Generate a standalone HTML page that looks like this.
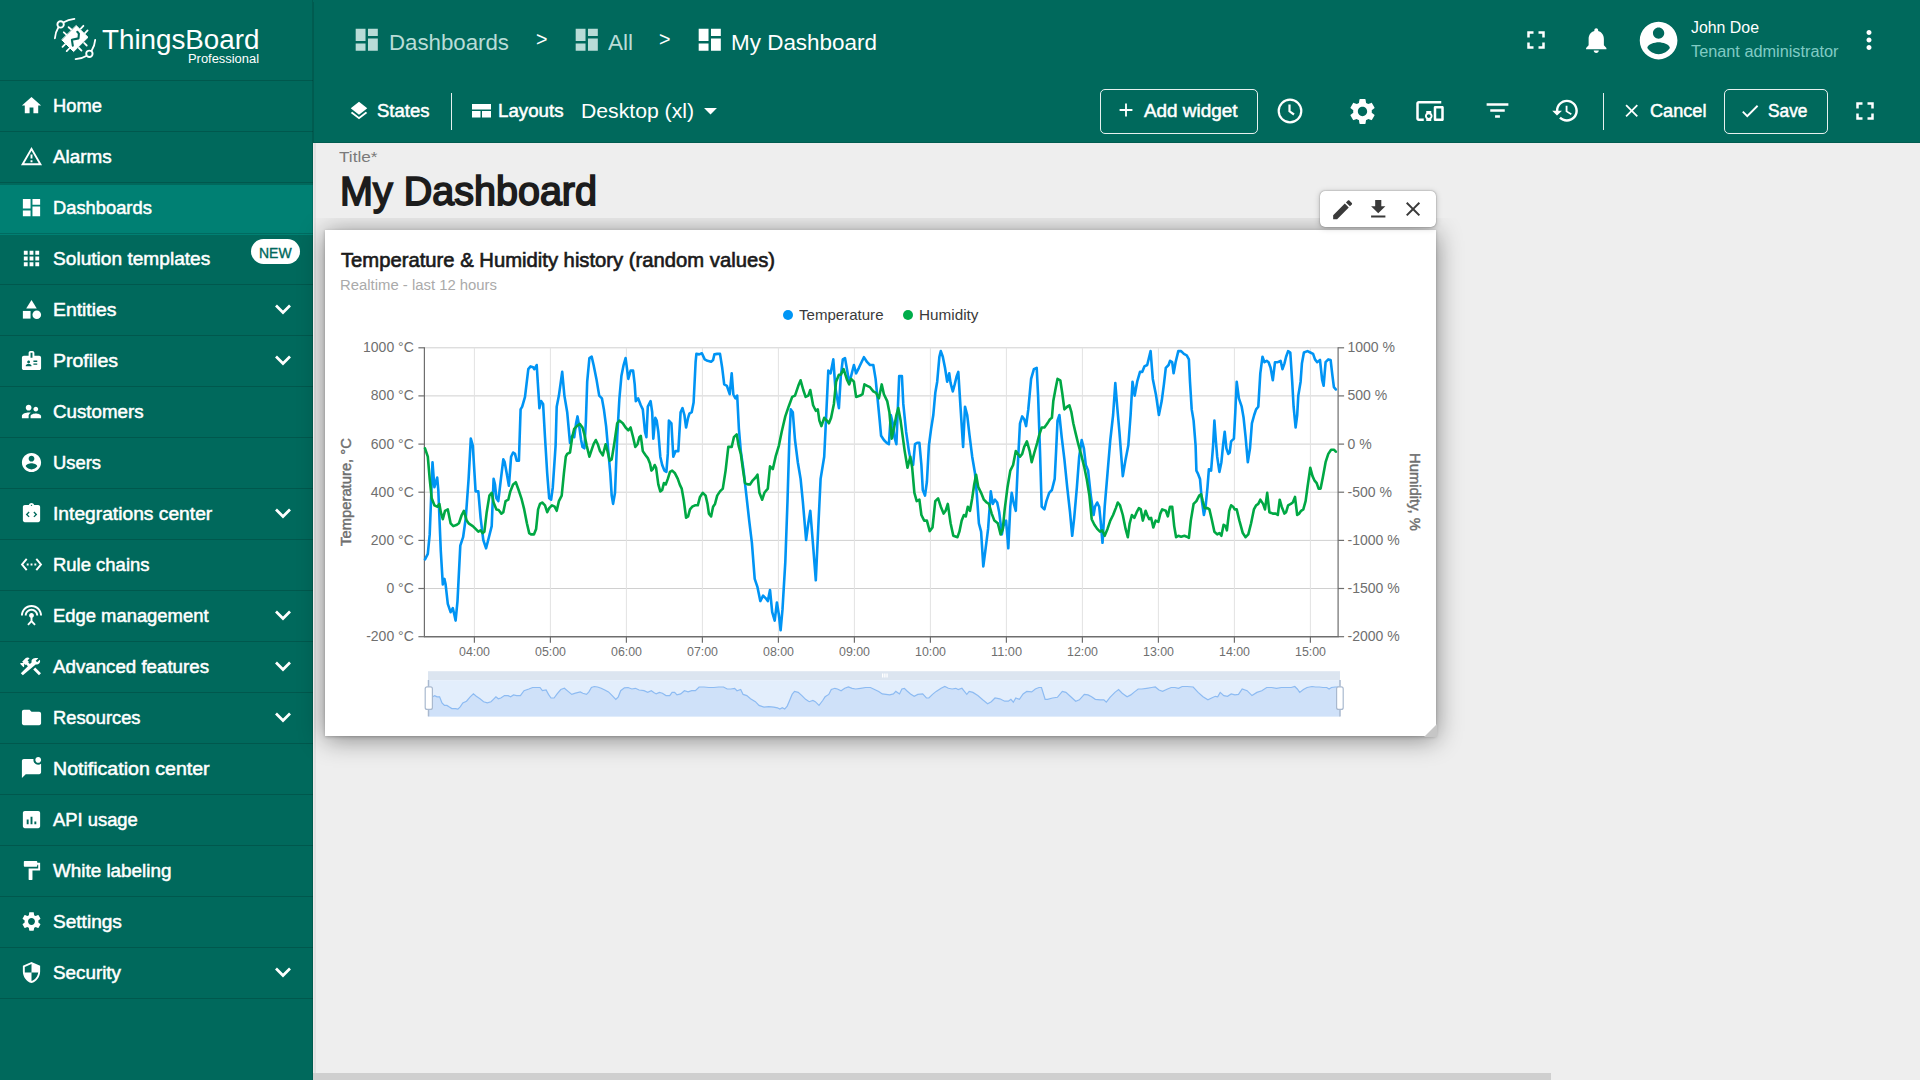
<!DOCTYPE html>
<html><head><meta charset="utf-8">
<style>
*{margin:0;padding:0;box-sizing:border-box}
html,body{width:1920px;height:1080px;overflow:hidden;background:#eeeeee;font-family:"Liberation Sans",sans-serif}
.abs{position:absolute}
.t{position:absolute;white-space:nowrap;line-height:1}
svg{display:block}
</style></head><body>
<div class="abs" style="left:0;top:0;width:313px;height:1080px;background:#00695c"></div>
<div class="abs" style="left:0;top:80px;width:313px;height:1px;background:rgba(0,0,0,0.16)"></div>
<div class="abs" style="left:0;top:131px;width:313px;height:1px;background:rgba(0,0,0,0.16)"></div>
<div class="t" style="left:53.00px;top:97.00px;font-size:18px;-webkit-text-stroke:0.49px #fff;color:#fff;transform:scaleX(1.0164);transform-origin:0 0;">Home</div>
<svg class="abs" style="left:19.5px;top:93.5px;width:23px;height:23px;fill:#fff;" viewBox="0 0 24 24"><path d="M10 20v-6h4v6h5v-8h3L12 3 2 12h3v8z"/></svg>
<div class="abs" style="left:0;top:182px;width:313px;height:1px;background:rgba(0,0,0,0.16)"></div>
<div class="t" style="left:53.00px;top:148.00px;font-size:18px;-webkit-text-stroke:0.49px #fff;color:#fff;transform:scaleX(1.0464);transform-origin:0 0;">Alarms</div>
<svg class="abs" style="left:19.5px;top:144.5px;width:23px;height:23px;fill:#fff;" viewBox="0 0 24 24"><path d="M12 5.99L19.53 19H4.47L12 5.99M12 2L1 21h22L12 2zm1 14h-2v2h2v-2zm0-6h-2v4h2v-4z"/></svg>
<div class="abs" style="left:0;top:185px;width:313px;height:50px;background:#008073"></div>
<div class="abs" style="left:0;top:233px;width:313px;height:1px;background:rgba(0,0,0,0.16)"></div>
<div class="t" style="left:53.00px;top:199.00px;font-size:18px;-webkit-text-stroke:0.49px #fff;color:#fff;transform:scaleX(1.0179);transform-origin:0 0;">Dashboards</div>
<svg class="abs" style="left:19.5px;top:195.5px;width:23px;height:23px;fill:#fff;" viewBox="0 0 24 24"><path d="M3 13h8V3H3v10zm0 8h8v-6H3v6zm10 0h8V11h-8v10zm0-18v6h8V3h-8z"/></svg>
<div class="abs" style="left:0;top:284px;width:313px;height:1px;background:rgba(0,0,0,0.16)"></div>
<div class="t" style="left:53.00px;top:250.00px;font-size:18px;-webkit-text-stroke:0.49px #fff;color:#fff;transform:scaleX(1.0619);transform-origin:0 0;">Solution templates</div>
<svg class="abs" style="left:19.5px;top:246.5px;width:23px;height:23px;fill:#fff;" viewBox="0 0 24 24"><path d="M4 8h4V4H4v4zm6 12h4v-4h-4v4zm-6 0h4v-4H4v4zm0-6h4v-4H4v4zm6 0h4v-4h-4v4zm6-10v4h4V4h-4zm-6 4h4V4h-4v4zm6 6h4v-4h-4v4zm0 6h4v-4h-4v4z"/></svg>
<div class="abs" style="left:0;top:335px;width:313px;height:1px;background:rgba(0,0,0,0.16)"></div>
<div class="t" style="left:53.00px;top:301.00px;font-size:18px;-webkit-text-stroke:0.49px #fff;color:#fff;transform:scaleX(1.0758);transform-origin:0 0;">Entities</div>
<svg class="abs" style="left:19.5px;top:297.5px;width:23px;height:23px;fill:#fff;" viewBox="0 0 24 24"><path d="M12 2l-5.5 9h11z"/><circle cx="17.5" cy="17.5" r="4.5"/><path d="M3 13.5h8v8H3z"/></svg>
<svg class="abs" style="left:272px;top:301.25px;width:22px;height:14px" viewBox="0 0 22 14"><path d="M4 4.5 L11 11.5 L18 4.5" fill="none" stroke="#fff" stroke-width="2.7"/></svg>
<div class="abs" style="left:0;top:386px;width:313px;height:1px;background:rgba(0,0,0,0.16)"></div>
<div class="t" style="left:53.00px;top:352.00px;font-size:18px;-webkit-text-stroke:0.49px #fff;color:#fff;transform:scaleX(1.0830);transform-origin:0 0;">Profiles</div>
<svg class="abs" style="left:19.5px;top:348.5px;width:23px;height:23px;fill:#fff;" viewBox="0 0 24 24"><path d="M20 7h-5V4c0-1.1-.9-2-2-2h-2c-1.1 0-2 .9-2 2v3H4c-1.1 0-2 .9-2 2v11c0 1.1.9 2 2 2h16c1.1 0 2-.9 2-2V9c0-1.1-.9-2-2-2zM9 12c.83 0 1.5.67 1.5 1.5S9.83 15 9 15s-1.5-.67-1.5-1.5S8.17 12 9 12zm3 6H6v-.43c0-.6.36-1.15.92-1.39.64-.28 1.34-.43 2.08-.43s1.44.15 2.08.43c.55.24.92.78.92 1.39V18zm1-9h-2V4h2v5zm5 7.5h-4V15h4v1.5zm0-3h-4V12h4v1.5z"/></svg>
<svg class="abs" style="left:272px;top:352.25px;width:22px;height:14px" viewBox="0 0 22 14"><path d="M4 4.5 L11 11.5 L18 4.5" fill="none" stroke="#fff" stroke-width="2.7"/></svg>
<div class="abs" style="left:0;top:437px;width:313px;height:1px;background:rgba(0,0,0,0.16)"></div>
<div class="t" style="left:53.00px;top:403.00px;font-size:18px;-webkit-text-stroke:0.49px #fff;color:#fff;transform:scaleX(1.0400);transform-origin:0 0;">Customers</div>
<svg class="abs" style="left:19.5px;top:399.5px;width:23px;height:23px;fill:#fff;" viewBox="0 0 24 24"><path d="M16.5 12c1.38 0 2.49-1.12 2.49-2.5S17.88 7 16.5 7C15.12 7 14 8.12 14 9.5s1.12 2.5 2.5 2.5zM9 11c1.66 0 2.99-1.34 2.99-3S10.66 5 9 5C7.34 5 6 6.34 6 8s1.34 3 3 3zm7.5 3c-1.83 0-5.5.92-5.5 2.75V19h11v-2.25c0-1.83-3.67-2.75-5.5-2.75zM9 13c-2.33 0-7 1.17-7 3.5V19h7v-2.25c0-.85.33-2.34 2.37-3.47C10.5 13.1 9.66 13 9 13z"/></svg>
<div class="abs" style="left:0;top:488px;width:313px;height:1px;background:rgba(0,0,0,0.16)"></div>
<div class="t" style="left:53.00px;top:454.00px;font-size:18px;-webkit-text-stroke:0.49px #fff;color:#fff;transform:scaleX(1.0212);transform-origin:0 0;">Users</div>
<svg class="abs" style="left:19.5px;top:450.5px;width:23px;height:23px;fill:#fff;" viewBox="0 0 24 24"><path d="M12 2C6.48 2 2 6.48 2 12s4.48 10 10 10 10-4.48 10-10S17.52 2 12 2zm0 3c1.66 0 3 1.34 3 3s-1.34 3-3 3-3-1.34-3-3 1.34-3 3-3zm0 14.2c-2.5 0-4.71-1.28-6-3.22.03-1.99 4-3.08 6-3.08 1.99 0 5.97 1.09 6 3.08-1.29 1.94-3.5 3.22-6 3.22z"/></svg>
<div class="abs" style="left:0;top:539px;width:313px;height:1px;background:rgba(0,0,0,0.16)"></div>
<div class="t" style="left:53.00px;top:505.00px;font-size:18px;-webkit-text-stroke:0.49px #fff;color:#fff;transform:scaleX(1.0681);transform-origin:0 0;">Integrations center</div>
<svg class="abs" style="left:19.5px;top:501.5px;width:23px;height:23px;fill:#fff;" viewBox="0 0 24 24"><path d="M19 3h-4.18C14.4 1.84 13.3 1 12 1s-2.4.84-2.82 2H5c-1.1 0-2 .9-2 2v14c0 1.1.9 2 2 2h14c1.1 0 2-.9 2-2V5c0-1.1-.9-2-2-2zm-7-.25c.41 0 .75.34.75.75s-.34.75-.75.75-.75-.34-.75-.75.34-.75.75-.75zM10 15l-1 1-3-3 3-3 1 1-2 2 2 2zm4 0l2-2-2-2 1-1 3 3-3 3-1-1z"/></svg>
<svg class="abs" style="left:272px;top:505.25px;width:22px;height:14px" viewBox="0 0 22 14"><path d="M4 4.5 L11 11.5 L18 4.5" fill="none" stroke="#fff" stroke-width="2.7"/></svg>
<div class="abs" style="left:0;top:590px;width:313px;height:1px;background:rgba(0,0,0,0.16)"></div>
<div class="t" style="left:53.00px;top:556.00px;font-size:18px;-webkit-text-stroke:0.49px #fff;color:#fff;transform:scaleX(1.0260);transform-origin:0 0;">Rule chains</div>
<svg class="abs" style="left:19.5px;top:552.5px;width:23px;height:23px;fill:#fff;" viewBox="0 0 24 24"><path d="M7.77 6.76L6.23 5.48.82 12l5.41 6.52 1.54-1.28L3.42 12l4.35-5.24zM7 13h2v-2H7v2zm10-2h-2v2h2v-2zm-6 2h2v-2h-2v2zm6.77-7.52l-1.54 1.28L20.58 12l-4.35 5.24 1.54 1.28L23.18 12l-5.41-6.52z"/></svg>
<div class="abs" style="left:0;top:641px;width:313px;height:1px;background:rgba(0,0,0,0.16)"></div>
<div class="t" style="left:53.00px;top:607.00px;font-size:18px;-webkit-text-stroke:0.49px #fff;color:#fff;transform:scaleX(1.0223);transform-origin:0 0;">Edge management</div>
<svg class="abs" style="left:19.5px;top:603.5px;width:23px;height:23px;fill:#fff;" viewBox="0 0 24 24"><path d="M12 5c-3.87 0-7 3.13-7 7h2c0-2.76 2.24-5 5-5s5 2.24 5 5h2c0-3.87-3.13-7-7-7zm1 9.29c.88-.39 1.5-1.26 1.5-2.29 0-1.38-1.12-2.5-2.5-2.5S9.5 10.62 9.5 12c0 1.02.62 1.9 1.5 2.29v3.3L7.59 21 9 22.41l3-3 3 3L16.41 21 13 17.59v-3.3zM12 1C5.93 1 1 5.93 1 12h2c0-4.97 4.03-9 9-9s9 4.03 9 9h2c0-6.07-4.93-11-11-11z"/></svg>
<svg class="abs" style="left:272px;top:607.25px;width:22px;height:14px" viewBox="0 0 22 14"><path d="M4 4.5 L11 11.5 L18 4.5" fill="none" stroke="#fff" stroke-width="2.7"/></svg>
<div class="abs" style="left:0;top:692px;width:313px;height:1px;background:rgba(0,0,0,0.16)"></div>
<div class="t" style="left:53.00px;top:658.00px;font-size:18px;-webkit-text-stroke:0.49px #fff;color:#fff;transform:scaleX(1.0393);transform-origin:0 0;">Advanced features</div>
<svg class="abs" style="left:19.5px;top:654.5px;width:23px;height:23px;fill:#fff;" viewBox="0 0 24 24"><path d="M13.783 15.172l2.121-2.121 5.996 5.996-2.121 2.121zM17.5 10c1.93 0 3.5-1.57 3.5-3.5 0-.58-.16-1.12-.41-1.6l-2.7 2.7-1.49-1.49 2.7-2.7c-.48-.25-1.02-.41-1.6-.41C13.57 3 12 4.57 12 6.5c0 .41.08.8.21 1.160l-1.85 1.85-1.78-1.78.71-.71-1.41-1.41L10 3.49c-1.17-1.17-3.070-1.17-4.240 0L2.22 7.03l1.41 1.41H.81l-.71.71 3.54 3.54.71-.71V9.15l1.41 1.41.71-.71 1.78 1.78-7.41 7.41 2.12 2.12L16.34 9.79c.36.13.75.21 1.16.21z"/></svg>
<svg class="abs" style="left:272px;top:658.25px;width:22px;height:14px" viewBox="0 0 22 14"><path d="M4 4.5 L11 11.5 L18 4.5" fill="none" stroke="#fff" stroke-width="2.7"/></svg>
<div class="abs" style="left:0;top:743px;width:313px;height:1px;background:rgba(0,0,0,0.16)"></div>
<div class="t" style="left:53.00px;top:709.00px;font-size:18px;-webkit-text-stroke:0.49px #fff;color:#fff;transform:scaleX(1.0170);transform-origin:0 0;">Resources</div>
<svg class="abs" style="left:19.5px;top:705.5px;width:23px;height:23px;fill:#fff;" viewBox="0 0 24 24"><path d="M10 4H4c-1.1 0-1.99.9-1.99 2L2 18c0 1.1.9 2 2 2h16c1.1 0 2-.9 2-2V8c0-1.1-.9-2-2-2h-8l-2-2z"/></svg>
<svg class="abs" style="left:272px;top:709.25px;width:22px;height:14px" viewBox="0 0 22 14"><path d="M4 4.5 L11 11.5 L18 4.5" fill="none" stroke="#fff" stroke-width="2.7"/></svg>
<div class="abs" style="left:0;top:794px;width:313px;height:1px;background:rgba(0,0,0,0.16)"></div>
<div class="t" style="left:53.00px;top:760.00px;font-size:18px;-webkit-text-stroke:0.49px #fff;color:#fff;transform:scaleX(1.0870);transform-origin:0 0;">Notification center</div>
<svg class="abs" style="left:19.5px;top:756.5px;width:23px;height:23px;fill:#fff;" viewBox="0 0 24 24"><path d="M22 6.98V16c0 1.1-.9 2-2 2H6l-4 4V4c0-1.1.9-2 2-2h10.1c-.06.32-.1.66-.1 1 0 2.76 2.24 5 5 5 1.13 0 2.160-.39 3-1.020zM16 3c0 1.66 1.34 3 3 3s3-1.34 3-3-1.34-3-3-3-3 1.34-3 3z"/></svg>
<div class="abs" style="left:0;top:845px;width:313px;height:1px;background:rgba(0,0,0,0.16)"></div>
<div class="t" style="left:53.00px;top:811.00px;font-size:18px;-webkit-text-stroke:0.49px #fff;color:#fff;transform:scaleX(1.0210);transform-origin:0 0;">API usage</div>
<svg class="abs" style="left:19.5px;top:807.5px;width:23px;height:23px;fill:#fff;" viewBox="0 0 24 24"><path d="M19 3H5c-1.1 0-2 .9-2 2v14c0 1.1.9 2 2 2h14c1.1 0 2-.9 2-2V5c0-1.1-.9-2-2-2zM9 17H7v-5h2v5zm4 0h-2V9h2v8zm4 0h-2v-3h2v3z"/></svg>
<div class="abs" style="left:0;top:896px;width:313px;height:1px;background:rgba(0,0,0,0.16)"></div>
<div class="t" style="left:53.00px;top:862.00px;font-size:18px;-webkit-text-stroke:0.49px #fff;color:#fff;transform:scaleX(1.0472);transform-origin:0 0;">White labeling</div>
<svg class="abs" style="left:19.5px;top:858.5px;width:23px;height:23px;fill:#fff;" viewBox="0 0 24 24"><path d="M18 4V3c0-.55-.45-1-1-1H5c-.55 0-1 .45-1 1v4c0 .55.45 1 1 1h12c.55 0 1-.45 1-1V6h1v4H9v11c0 .55.45 1 1 1h2c.55 0 1-.45 1-1v-9h8V4h-3z"/></svg>
<div class="abs" style="left:0;top:947px;width:313px;height:1px;background:rgba(0,0,0,0.16)"></div>
<div class="t" style="left:53.00px;top:913.00px;font-size:18px;-webkit-text-stroke:0.49px #fff;color:#fff;transform:scaleX(1.0593);transform-origin:0 0;">Settings</div>
<svg class="abs" style="left:19.5px;top:909.5px;width:23px;height:23px;fill:#fff;" viewBox="0 0 24 24"><path d="M19.14 12.94c.04-.3.06-.61.06-.94 0-.32-.02-.64-.07-.94l2.03-1.58c.18-.14.23-.41.12-.61l-1.920-3.32c-.12-.22-.37-.29-.59-.22l-2.39.96c-.5-.38-1.03-.7-1.62-.94l-.36-2.54c-.04-.24-.24-.41-.48-.41h-3.84c-.24 0-.43.17-.47.41l-.36 2.54c-.59.24-1.13.57-1.62.94l-2.39-.96c-.22-.08-.47 0-.59.22L2.74 8.87c-.12.21-.08.47.12.61l2.03 1.58c-.05.3-.09.63-.09.94s.02.64.07.94l-2.03 1.58c-.18.14-.23.41-.12.61l1.92 3.32c.12.22.37.29.59.22l2.39-.96c.5.38 1.03.7 1.62.94l.36 2.54c.05.24.24.41.48.41h3.84c.24 0 .44-.17.47-.41l.36-2.54c.59-.24 1.13-.56 1.62-.94l2.39.96c.22.08.47 0 .59-.22l1.92-3.32c.12-.22.07-.47-.12-.61l-2.01-1.58zM12 15.6c-1.98 0-3.6-1.62-3.6-3.6s1.62-3.6 3.6-3.6 3.6 1.62 3.6 3.6-1.62 3.6-3.6 3.6z"/></svg>
<div class="abs" style="left:0;top:998px;width:313px;height:1px;background:rgba(0,0,0,0.16)"></div>
<div class="t" style="left:53.00px;top:964.00px;font-size:18px;-webkit-text-stroke:0.49px #fff;color:#fff;transform:scaleX(1.0458);transform-origin:0 0;">Security</div>
<svg class="abs" style="left:19.5px;top:960.5px;width:23px;height:23px;fill:#fff;" viewBox="0 0 24 24"><path d="M12 1L3 5v6c0 5.55 3.84 10.74 9 12 5.16-1.26 9-6.45 9-12V5l-9-4zm0 10.99h7c-.53 4.12-3.28 7.79-7 8.94V12H5V6.3l7-3.11v8.8z"/></svg>
<svg class="abs" style="left:272px;top:964.25px;width:22px;height:14px" viewBox="0 0 22 14"><path d="M4 4.5 L11 11.5 L18 4.5" fill="none" stroke="#fff" stroke-width="2.7"/></svg>
<div class="abs" style="left:251.3px;top:239.2px;width:49px;height:25px;border-radius:13px;background:#fff"></div>
<div class="t" style="left:259.30px;top:245.00px;font-size:15.5px;-webkit-text-stroke:0.40px #00695c;color:#00695c;transform:scaleX(0.9015);transform-origin:0 0;">NEW</div>
<div class="t" style="left:101.80px;top:25.00px;font-size:28.4px;color:#fff;transform:scaleX(0.9781);transform-origin:0 0;">ThingsBoard</div>
<div class="t" style="left:187.60px;top:53.00px;font-size:12px;color:#fff;transform:scaleX(1.0752);transform-origin:0 0;">Professional</div>
<svg class="abs" style="left:50px;top:14px;width:50px;height:50px" viewBox="0 0 50 50" fill="none" stroke="#fff" stroke-linecap="round">
<circle cx="10.6" cy="10.4" r="3.2" stroke-width="1.9"/>
<path d="M13.8 8.3 C17 6.3 20.5 5.4 24.4 4.9" stroke-width="1.8"/>
<path d="M8.3 13.6 C6.3 16.8 5.2 20.4 4.9 24.3" stroke-width="1.8"/>
<circle cx="39.4" cy="39.8" r="3.2" stroke-width="1.9"/>
<path d="M36.2 41.9 C33 43.9 29.5 44.8 25.6 45.2" stroke-width="1.8"/>
<path d="M41.7 36.6 C43.7 33.4 44.8 29.8 45.2 25.8" stroke-width="1.8"/>
<path d="M26.4 11.8 L38 23.3 L23.6 37.6 L12 26 Z" fill="#fff" stroke="#fff" stroke-width="1" stroke-linejoin="round"/>
<g stroke-width="1.8">
<path d="M13.8 18.3 L16.6 20.8"/><path d="M18.6 13.2 L21.3 15.5"/>
<path d="M33.4 11.8 L30.8 14.6"/><path d="M37.6 16.4 L35 19.2"/>
<path d="M36.7 31.5 L34.1 28.9"/><path d="M31.5 36.6 L28.9 34"/>
<path d="M12.5 32.9 L15 30.3"/><path d="M16.7 37.1 L19.2 34.5"/>
</g>
<path d="M27.3 17.8 L28.9 19.6 L28.5 24.4 L21.9 25.8 L22.8 31.6" stroke="#00695c" stroke-width="2.1" stroke-linejoin="round"/>
</svg>
<div class="abs" style="left:312px;top:0;width:1px;height:1080px;background:rgba(0,0,0,0.12)"></div>
<div class="abs" style="left:313px;top:0;width:1607px;height:143px;background:#00695c"></div>
<div class="abs" style="left:313px;top:2px;width:1px;height:140px;background:rgba(0,0,0,0.13)"></div>
<svg class="abs" style="left:352.0px;top:25.0px;width:29.5px;height:29.5px;fill:#b9dcd7;" viewBox="0 0 24 24"><path d="M3 13h8V3H3v10zm0 8h8v-6H3v6zm10 0h8V11h-8v10zm0-18v6h8V3h-8z"/></svg>
<div class="t" style="left:388.50px;top:32.00px;font-size:22px;color:#b9dcd7;transform:scaleX(1.0116);transform-origin:0 0;">Dashboards</div>
<div class="t" style="left:535.50px;top:29.00px;font-size:20px;color:#fff;transform:scaleX(0.9846);transform-origin:0 0;">></div>
<svg class="abs" style="left:571.6px;top:24.9px;width:29.5px;height:29.5px;fill:#b9dcd7;" viewBox="0 0 24 24"><path d="M3 13h8V3H3v10zm0 8h8v-6H3v6zm10 0h8V11h-8v10zm0-18v6h8V3h-8z"/></svg>
<div class="t" style="left:607.50px;top:32.00px;font-size:22px;color:#b9dcd7;transform:scaleX(1.0226);transform-origin:0 0;">All</div>
<div class="t" style="left:658.50px;top:29.00px;font-size:20px;color:#fff;transform:scaleX(0.9846);transform-origin:0 0;">></div>
<svg class="abs" style="left:694.8px;top:24.9px;width:29.5px;height:29.5px;fill:#fff;" viewBox="0 0 24 24"><path d="M3 13h8V3H3v10zm0 8h8v-6H3v6zm10 0h8V11h-8v10zm0-18v6h8V3h-8z"/></svg>
<div class="t" style="left:730.50px;top:32.00px;font-size:22px;color:#fff;transform:scaleX(1.0205);transform-origin:0 0;">My Dashboard</div>
<svg class="abs" style="left:1521px;top:25px;width:30px;height:30px;fill:#fff;" viewBox="0 0 24 24"><path d="M7 14H5v5h5v-2H7v-3zm-2-4h2V7h3V5H5v5zm12 7h-3v2h5v-5h-2v3zM14 5v2h3v3h2V5h-5z"/></svg>
<svg class="abs" style="left:1580.9px;top:24.8px;width:30.5px;height:30.5px;fill:#fff;" viewBox="0 0 24 24"><path d="M12 22c1.1 0 2-.9 2-2h-4c0 1.1.89 2 2 2zm6-6v-5c0-3.07-1.64-5.64-4.5-6.32V4c0-.83-.67-1.5-1.5-1.5s-1.5.67-1.5 1.5v.68C7.63 5.36 6 7.92 6 11v5l-2 2v1h16v-1l-2-2z"/></svg>
<svg class="abs" style="left:1636.3px;top:17.8px;width:45.2px;height:45.2px;fill:#fff;" viewBox="0 0 24 24"><path d="M12 2C6.48 2 2 6.48 2 12s4.48 10 10 10 10-4.48 10-10S17.52 2 12 2zm0 3c1.66 0 3 1.34 3 3s-1.34 3-3 3-3-1.34-3-3 1.34-3 3-3zm0 14.2c-2.5 0-4.71-1.28-6-3.22.03-1.99 4-3.08 6-3.08 1.99 0 5.97 1.09 6 3.08-1.29 1.94-3.5 3.22-6 3.22z"/></svg>
<div class="t" style="left:1691.20px;top:20.00px;font-size:16px;color:#fff;transform:scaleX(0.9928);transform-origin:0 0;">John Doe</div>
<div class="t" style="left:1691.20px;top:44.00px;font-size:16px;color:#80cbc4;transform:scaleX(1.0175);transform-origin:0 0;">Tenant administrator</div>
<svg class="abs" style="left:1854px;top:25px;width:30px;height:30px;fill:#fff;" viewBox="0 0 24 24"><path d="M12 8c1.1 0 2-.9 2-2s-.9-2-2-2-2 .9-2 2 .9 2 2 2zm0 2c-1.1 0-2 .9-2 2s.9 2 2 2 2-.9 2-2-.9-2-2-2zm0 6c-1.1 0-2 .9-2 2s.9 2 2 2 2-.9 2-2-.9-2-2-2z"/></svg>
<svg class="abs" style="left:347.6px;top:99.7px;width:22px;height:22px;fill:#fff;" viewBox="0 0 24 24"><path d="M11.99 18.54l-7.37-5.73L3 14.07l9 7 9-7-1.63-1.27-7.38 5.74zM12 16l7.36-5.73L21 9l-9-7-9 7 1.63 1.27L12 16z"/></svg>
<div class="t" style="left:376.50px;top:102.00px;font-size:18px;-webkit-text-stroke:0.49px #fff;color:#fff;transform:scaleX(1.0288);transform-origin:0 0;">States</div>
<div class="abs" style="left:451px;top:93px;width:1px;height:37px;background:rgba(255,255,255,0.9)"></div>
<svg class="abs" style="left:471.5px;top:104px;width:19px;height:13.5px" viewBox="0 0 19 13.5" fill="#fff">
<rect x="0" y="0" width="19" height="5.5"/><rect x="0" y="7" width="8.5" height="6.5"/><rect x="10" y="7" width="9" height="6.5"/></svg>
<div class="t" style="left:498.20px;top:102.00px;font-size:18px;-webkit-text-stroke:0.49px #fff;color:#fff;transform:scaleX(1.0389);transform-origin:0 0;">Layouts</div>
<div class="t" style="left:581.20px;top:101.00px;font-size:20px;color:#fff;transform:scaleX(1.0591);transform-origin:0 0;">Desktop (xl)</div>
<svg class="abs" style="left:695px;top:95px;width:31px;height:31px;fill:#fff;" viewBox="0 0 24 24"><path d="M7 10l5 5 5-5z"/></svg>
<div class="abs" style="left:1100px;top:89px;width:158px;height:45px;border:1px solid rgba(255,255,255,0.9);border-radius:5px"></div>
<svg class="abs" style="left:1115px;top:99.4px;width:22px;height:22px;fill:#fff;" viewBox="0 0 24 24"><path d="M19 13h-6v6h-2v-6H5v-2h6V5h2v6h6v2z"/></svg>
<div class="t" style="left:1144.00px;top:102.00px;font-size:18px;-webkit-text-stroke:0.49px #fff;color:#fff;transform:scaleX(1.0498);transform-origin:0 0;">Add widget</div>
<svg class="abs" style="left:1276px;top:97px;width:28px;height:28px" viewBox="0 0 28 28" fill="none" stroke="#fff" stroke-width="2.2">
<circle cx="14" cy="14" r="11.3"/><path d="M13.5 7.5 V14.3 L18 17.5"/></svg>
<svg class="abs" style="left:1346.5px;top:95.5px;width:31px;height:31px;fill:#fff;" viewBox="0 0 24 24"><path d="M19.14 12.94c.04-.3.06-.61.06-.94 0-.32-.02-.64-.07-.94l2.03-1.58c.18-.14.23-.41.12-.61l-1.920-3.32c-.12-.22-.37-.29-.59-.22l-2.39.96c-.5-.38-1.03-.7-1.62-.94l-.36-2.54c-.04-.24-.24-.41-.48-.41h-3.84c-.24 0-.43.17-.47.41l-.36 2.54c-.59.24-1.13.57-1.62.94l-2.39-.96c-.22-.08-.47 0-.59.22L2.74 8.87c-.12.21-.08.47.12.61l2.03 1.58c-.05.3-.09.63-.09.94s.02.64.07.94l-2.03 1.58c-.18.14-.23.41-.12.61l1.92 3.32c.12.22.37.29.59.22l2.39-.96c.5.38 1.03.7 1.62.94l.36 2.54c.05.24.24.41.48.41h3.84c.24 0 .44-.17.47-.41l.36-2.54c.59-.24 1.13-.56 1.62-.94l2.39.96c.22.08.47 0 .59-.22l1.92-3.32c.12-.22.07-.47-.12-.61l-2.01-1.58zM12 15.6c-1.98 0-3.6-1.62-3.6-3.6s1.62-3.6 3.6-3.6 3.6 1.62 3.6 3.6-1.62 3.6-3.6 3.6z"/></svg>
<svg class="abs" style="left:1414.8px;top:96.3px;width:30px;height:30px;fill:#fff;" viewBox="0 0 24 24"><path d="M3 6h18V4H3c-1.1 0-2 .9-2 2v12c0 1.1.9 2 2 2h4v-2H3V6zm10 6H9v1.78c-.61.55-1 1.33-1 2.22s.39 1.67 1 2.22V20h4v-1.78c.61-.55 1-1.34 1-2.22s-.39-1.67-1-2.22V12zm-2 5.5c-.83 0-1.5-.67-1.5-1.5s.67-1.5 1.5-1.5 1.5.67 1.5 1.5-.67 1.5-1.5 1.5zM22 8h-6c-.5 0-1 .5-1 1v10c0 .5.5 1 1 1h6c.5 0 1-.5 1-1V9c0-.5-.5-1-1-1zm-1 10h-4v-8h4v8z"/></svg>
<svg class="abs" style="left:1483px;top:95.5px;width:29px;height:29px;fill:#fff;" viewBox="0 0 24 24"><path d="M10 18h4v-2h-4v2zM3 6v2h18V6H3zm3 7h12v-2H6v2z"/></svg>
<svg class="abs" style="left:1550.8px;top:96px;width:29.3px;height:29.3px;fill:#fff;" viewBox="0 0 24 24"><path d="M13 3c-4.97 0-9 4.03-9 9H1l3.89 3.89.07.14L9 12H6c0-3.87 3.13-7 7-7s7 3.13 7 7-3.13 7-7 7c-1.93 0-3.68-.79-4.94-2.06l-1.42 1.42C8.27 19.99 10.51 21 13 21c4.97 0 9-4.03 9-9s-4.03-9-9-9zm-1 5v5l4.28 2.54.72-1.21-3.5-2.08V8H12z"/></svg>
<div class="abs" style="left:1603px;top:93px;width:1px;height:37px;background:rgba(255,255,255,0.9)"></div>
<svg class="abs" style="left:1621px;top:100.3px;width:21.4px;height:21.4px;fill:#fff;" viewBox="0 0 24 24"><path d="M19 6.41L17.59 5 12 10.59 6.41 5 5 6.41 10.59 12 5 17.59 6.41 19 12 13.41 17.59 19 19 17.59 13.41 12z"/></svg>
<div class="t" style="left:1650.00px;top:102.00px;font-size:18px;-webkit-text-stroke:0.49px #fff;color:#fff;transform:scaleX(1.0084);transform-origin:0 0;">Cancel</div>
<div class="abs" style="left:1724px;top:89px;width:104px;height:45px;border:1px solid rgba(255,255,255,0.9);border-radius:5px"></div>
<svg class="abs" style="left:1739px;top:100px;width:22px;height:22px;fill:#fff;" viewBox="0 0 24 24"><path d="M9 16.17L4.83 12l-1.42 1.42L9 19 21 7l-1.41-1.41z"/></svg>
<div class="t" style="left:1767.50px;top:102.00px;font-size:18px;-webkit-text-stroke:0.49px #fff;color:#fff;transform:scaleX(0.9628);transform-origin:0 0;">Save</div>
<svg class="abs" style="left:1850px;top:95.8px;width:30px;height:30px;fill:#fff;" viewBox="0 0 24 24"><path d="M7 14H5v5h5v-2H7v-3zm-2-4h2V7h3V5H5v5zm12 7h-3v2h5v-5h-2v3zM14 5v2h3v3h2V5h-5z"/></svg>
<div class="abs" style="left:313px;top:143px;width:1607px;height:937px;background:#eeeeee"></div>
<div class="abs" style="left:325px;top:230px;width:1111px;height:506px;background:#fff;box-shadow:0 1px 3px rgba(0,0,0,0.22),0 3px 24px rgba(0,0,0,0.45)"></div>
<div class="t" style="left:340.50px;top:249.00px;font-size:21px;-webkit-text-stroke:0.66px #1a1a1a;color:#1a1a1a;transform:scaleX(0.9634);transform-origin:0 0;">Temperature &amp; Humidity history (random values)</div>
<div class="t" style="left:340.00px;top:278.00px;font-size:14px;color:#aaaaaa;transform:scaleX(1.0620);transform-origin:0 0;">Realtime - last 12 hours</div>
<div class="abs" style="left:783px;top:310px;width:10px;height:10px;border-radius:5px;background:#0096f5"></div>
<div class="abs" style="left:903px;top:310px;width:10px;height:10px;border-radius:5px;background:#00ad4a"></div>
<div class="t" style="left:799.00px;top:307.00px;font-size:15px;color:#3a3a3a;transform:scaleX(1.0035);transform-origin:0 0;">Temperature</div>
<div class="t" style="left:918.70px;top:307.00px;font-size:15px;color:#3a3a3a;transform:scaleX(1.0198);transform-origin:0 0;">Humidity</div>
<svg class="abs" style="left:0;top:0;width:1920px;height:1080px;overflow:visible" viewBox="0 0 1920 1080">
<line x1="424.4" y1="347.8" x2="1338.1" y2="347.8" stroke="#d0d0d0" stroke-width="1"/>
<line x1="424.4" y1="395.9" x2="1338.1" y2="395.9" stroke="#d0d0d0" stroke-width="1"/>
<line x1="424.4" y1="444.1" x2="1338.1" y2="444.1" stroke="#d0d0d0" stroke-width="1"/>
<line x1="424.4" y1="492.2" x2="1338.1" y2="492.2" stroke="#d0d0d0" stroke-width="1"/>
<line x1="424.4" y1="540.4" x2="1338.1" y2="540.4" stroke="#d0d0d0" stroke-width="1"/>
<line x1="424.4" y1="588.5" x2="1338.1" y2="588.5" stroke="#d0d0d0" stroke-width="1"/>
<line x1="474.4" y1="347.8" x2="474.4" y2="636.7" stroke="#e2e2e2" stroke-width="1"/>
<line x1="550.4" y1="347.8" x2="550.4" y2="636.7" stroke="#e2e2e2" stroke-width="1"/>
<line x1="626.4" y1="347.8" x2="626.4" y2="636.7" stroke="#e2e2e2" stroke-width="1"/>
<line x1="702.4" y1="347.8" x2="702.4" y2="636.7" stroke="#e2e2e2" stroke-width="1"/>
<line x1="778.4" y1="347.8" x2="778.4" y2="636.7" stroke="#e2e2e2" stroke-width="1"/>
<line x1="854.4" y1="347.8" x2="854.4" y2="636.7" stroke="#e2e2e2" stroke-width="1"/>
<line x1="930.4" y1="347.8" x2="930.4" y2="636.7" stroke="#e2e2e2" stroke-width="1"/>
<line x1="1006.4" y1="347.8" x2="1006.4" y2="636.7" stroke="#e2e2e2" stroke-width="1"/>
<line x1="1082.4" y1="347.8" x2="1082.4" y2="636.7" stroke="#e2e2e2" stroke-width="1"/>
<line x1="1158.4" y1="347.8" x2="1158.4" y2="636.7" stroke="#e2e2e2" stroke-width="1"/>
<line x1="1234.4" y1="347.8" x2="1234.4" y2="636.7" stroke="#e2e2e2" stroke-width="1"/>
<line x1="1310.4" y1="347.8" x2="1310.4" y2="636.7" stroke="#e2e2e2" stroke-width="1"/>
<line x1="424.4" y1="347.3" x2="424.4" y2="636.7" stroke="#6e6e6e" stroke-width="1.2"/>
<line x1="1338.1" y1="347.3" x2="1338.1" y2="636.7" stroke="#6e6e6e" stroke-width="1.2"/>
<line x1="423.9" y1="636.7" x2="1338.6" y2="636.7" stroke="#6e6e6e" stroke-width="1.5"/>
<line x1="418.4" y1="347.8" x2="424.4" y2="347.8" stroke="#6e6e6e" stroke-width="1.2"/>
<line x1="1338.1" y1="347.8" x2="1344.1" y2="347.8" stroke="#6e6e6e" stroke-width="1.2"/>
<line x1="418.4" y1="395.9" x2="424.4" y2="395.9" stroke="#6e6e6e" stroke-width="1.2"/>
<line x1="1338.1" y1="395.9" x2="1344.1" y2="395.9" stroke="#6e6e6e" stroke-width="1.2"/>
<line x1="418.4" y1="444.1" x2="424.4" y2="444.1" stroke="#6e6e6e" stroke-width="1.2"/>
<line x1="1338.1" y1="444.1" x2="1344.1" y2="444.1" stroke="#6e6e6e" stroke-width="1.2"/>
<line x1="418.4" y1="492.2" x2="424.4" y2="492.2" stroke="#6e6e6e" stroke-width="1.2"/>
<line x1="1338.1" y1="492.2" x2="1344.1" y2="492.2" stroke="#6e6e6e" stroke-width="1.2"/>
<line x1="418.4" y1="540.4" x2="424.4" y2="540.4" stroke="#6e6e6e" stroke-width="1.2"/>
<line x1="1338.1" y1="540.4" x2="1344.1" y2="540.4" stroke="#6e6e6e" stroke-width="1.2"/>
<line x1="418.4" y1="588.5" x2="424.4" y2="588.5" stroke="#6e6e6e" stroke-width="1.2"/>
<line x1="1338.1" y1="588.5" x2="1344.1" y2="588.5" stroke="#6e6e6e" stroke-width="1.2"/>
<line x1="418.4" y1="636.7" x2="424.4" y2="636.7" stroke="#6e6e6e" stroke-width="1.2"/>
<line x1="1338.1" y1="636.7" x2="1344.1" y2="636.7" stroke="#6e6e6e" stroke-width="1.2"/>
<line x1="474.4" y1="636.7" x2="474.4" y2="642.7" stroke="#6e6e6e" stroke-width="1.2"/>
<line x1="550.4" y1="636.7" x2="550.4" y2="642.7" stroke="#6e6e6e" stroke-width="1.2"/>
<line x1="626.4" y1="636.7" x2="626.4" y2="642.7" stroke="#6e6e6e" stroke-width="1.2"/>
<line x1="702.4" y1="636.7" x2="702.4" y2="642.7" stroke="#6e6e6e" stroke-width="1.2"/>
<line x1="778.4" y1="636.7" x2="778.4" y2="642.7" stroke="#6e6e6e" stroke-width="1.2"/>
<line x1="854.4" y1="636.7" x2="854.4" y2="642.7" stroke="#6e6e6e" stroke-width="1.2"/>
<line x1="930.4" y1="636.7" x2="930.4" y2="642.7" stroke="#6e6e6e" stroke-width="1.2"/>
<line x1="1006.4" y1="636.7" x2="1006.4" y2="642.7" stroke="#6e6e6e" stroke-width="1.2"/>
<line x1="1082.4" y1="636.7" x2="1082.4" y2="642.7" stroke="#6e6e6e" stroke-width="1.2"/>
<line x1="1158.4" y1="636.7" x2="1158.4" y2="642.7" stroke="#6e6e6e" stroke-width="1.2"/>
<line x1="1234.4" y1="636.7" x2="1234.4" y2="642.7" stroke="#6e6e6e" stroke-width="1.2"/>
<line x1="1310.4" y1="636.7" x2="1310.4" y2="642.7" stroke="#6e6e6e" stroke-width="1.2"/>
<polyline points="425.0,559.4 427.8,553.9 429.7,534.4 432.5,462.2 434.4,487.2 437.2,477.5 438.3,490.0 440.8,551.1 442.8,584.4 444.4,578.9 445.6,584.4 447.8,603.9 450.6,612.2 452.8,608.1 454.4,615.0 455.6,620.6 457.5,601.1 460.3,545.6 463.1,537.2 465.8,517.8 468.6,478.9 470.8,438.6 472.8,445.6 475.6,491.4 478.3,491.4 480.6,517.8 483.3,540.0 486.1,548.3 488.9,537.2 491.7,526.1 493.6,478.9 495.0,484.4 496.4,498.3 498.3,501.1 500.6,481.7 503.3,459.4 504.7,462.2 506.7,473.3 508.9,485.8 511.1,456.7 513.1,452.5 515.0,453.9 516.7,460.8 518.9,460.8 520.6,409.4 522.2,406.7 525.0,396.9 528.3,369.2 530.6,366.4 533.1,367.2 534.4,369.2 536.7,365.0 538.1,387.2 539.4,408.1 541.1,401.1 543.1,403.9 545.0,437.2 547.2,473.3 549.2,498.3 551.1,499.7 552.8,487.2 555.6,445.6 556.7,406.7 558.9,395.6 562.2,371.9 564.4,395.6 567.2,412.2 570.0,442.8 572.2,435.8 574.2,437.2 576.1,423.3 577.5,416.4 579.2,426.1 581.1,440.0 582.5,446.9 584.4,448.3 585.8,423.3 587.2,381.7 589.4,358.1 591.7,356.7 593.6,365.0 596.4,378.9 599.2,395.6 601.9,398.3 603.9,409.4 606.1,426.1 608.3,451.1 610.3,473.3 611.7,495.6 613.1,503.9 615.0,492.8 617.2,437.2 619.4,398.3 621.4,376.1 623.6,365.0 625.6,358.1 626.9,367.8 628.3,378.9 630.6,370.6 633.1,370.6 634.7,384.4 635.8,401.1 638.1,398.3 640.8,405.3 642.8,409.4 645.0,431.7 646.4,437.2 647.8,406.7 650.6,401.1 652.2,412.2 653.3,438.6 655.3,417.8 656.7,420.6 658.3,431.7 660.3,456.7 662.2,465.0 664.4,470.6 666.4,471.9 667.8,453.9 668.9,420.6 671.4,423.3 673.3,456.7 675.6,451.1 678.3,451.1 680.6,412.2 682.5,408.1 684.4,415.0 686.1,427.5 688.1,417.8 689.4,413.6 691.7,412.2 693.6,402.5 695.6,362.2 696.4,353.9 699.2,354.4 701.9,353.3 704.7,359.4 707.5,360.8 711.1,361.7 713.1,360.0 714.4,354.4 717.2,353.9 720.0,353.9 722.2,367.8 724.2,384.4 726.9,385.8 729.7,394.2 731.7,373.3 733.3,394.2 735.3,398.3 737.2,395.6 738.9,428.9 740.8,451.1 743.6,470.6 746.4,495.6 749.2,520.6 751.9,542.8 754.7,578.9 757.5,587.2 760.3,601.1 763.1,595.6 765.8,598.3 767.8,601.1 770.0,590.0 772.2,612.2 774.7,620.6 776.9,602.5 778.9,615.0 780.6,630.3 782.5,609.4 785.3,562.2 787.5,501.1 789.4,437.2 790.8,409.4 792.8,412.2 795.0,440.0 797.8,462.2 800.6,478.9 802.8,501.1 806.1,540.0 808.3,523.3 810.3,510.8 813.1,545.6 815.8,580.3 818.6,520.6 820.6,478.9 824.2,456.7 826.1,417.8 828.3,370.6 830.6,373.3 833.3,359.4 835.3,387.2 836.7,395.6 838.9,408.1 840.8,376.1 842.8,359.4 845.0,358.1 847.2,370.6 849.2,383.1 851.1,376.1 853.9,365.0 856.1,373.3 858.9,367.8 863.9,357.2 867.2,362.2 870.0,365.0 873.3,365.0 875.6,378.9 877.8,401.1 879.7,420.6 881.1,435.8 883.9,440.0 886.7,442.8 888.9,444.2 890.8,415.0 892.8,423.3 894.4,437.2 896.4,444.2 897.8,409.4 899.2,376.1 901.9,376.1 903.3,403.9 906.1,431.7 908.9,451.1 911.1,462.2 913.1,465.0 915.0,444.2 917.2,442.8 919.4,442.8 921.4,465.0 922.8,490.0 925.0,495.6 926.9,481.7 928.9,445.6 931.1,428.9 933.3,415.0 935.3,392.8 937.2,381.7 939.4,356.7 940.8,351.1 942.8,356.7 945.0,367.8 947.2,381.7 949.2,373.3 950.6,383.1 952.8,391.4 954.7,384.4 956.7,376.1 958.3,371.9 960.3,403.9 963.1,446.9 965.0,406.7 967.2,415.0 969.4,434.4 972.2,456.7 975.0,473.3 976.9,495.6 978.9,523.3 981.1,531.7 983.3,566.4 985.3,551.1 988.1,528.9 990.8,491.4 992.8,503.9 995.0,499.7 997.2,502.5 999.2,512.2 1001.9,534.4 1003.3,526.1 1006.1,520.6 1008.3,548.3 1010.3,506.7 1011.7,492.8 1013.9,503.9 1015.8,510.8 1017.8,465.0 1020.0,423.3 1022.2,416.4 1024.2,419.2 1026.1,426.1 1028.3,409.4 1031.1,378.9 1033.9,369.2 1036.7,367.8 1038.1,395.6 1040.0,451.1 1041.7,506.7 1044.4,509.4 1046.4,501.1 1049.2,492.8 1051.9,490.0 1054.7,478.9 1056.1,451.1 1057.5,420.6 1059.4,415.0 1061.7,437.2 1064.4,459.4 1067.2,487.2 1070.0,512.2 1072.2,535.8 1074.2,517.8 1076.9,487.2 1079.2,456.7 1081.7,440.0 1083.9,448.3 1085.8,465.0 1088.1,470.6 1090.8,495.6 1093.6,515.0 1095.0,506.7 1097.2,502.5 1099.2,506.7 1100.6,520.6 1102.5,542.8 1104.7,506.7 1107.5,473.3 1110.3,440.0 1113.1,415.0 1115.3,383.1 1117.2,406.7 1119.4,431.7 1122.8,476.1 1125.6,459.4 1128.3,445.6 1130.6,415.0 1132.5,381.7 1134.7,395.6 1137.2,381.7 1140.0,371.9 1142.2,371.9 1144.4,366.4 1147.2,365.0 1150.6,351.1 1152.8,378.9 1156.1,395.6 1158.9,415.0 1161.7,401.1 1163.9,384.4 1165.8,367.8 1168.6,365.0 1170.0,360.8 1172.2,362.2 1173.6,373.3 1175.6,362.2 1178.3,351.1 1181.1,351.1 1183.9,353.9 1186.7,355.3 1188.9,359.4 1190.0,381.7 1191.7,409.4 1193.6,420.6 1195.6,445.6 1196.4,470.6 1197.8,473.3 1200.0,478.9 1201.9,501.1 1203.9,515.0 1205.6,506.7 1207.5,487.2 1208.9,469.2 1211.1,470.6 1213.1,445.6 1214.4,420.6 1215.8,440.0 1217.2,456.7 1219.4,471.9 1221.4,462.2 1223.3,442.8 1224.7,431.7 1226.4,448.3 1228.3,453.9 1229.7,452.5 1231.1,441.4 1233.9,438.6 1235.3,412.2 1236.7,381.7 1238.9,398.3 1241.7,406.7 1243.6,417.8 1245.6,437.2 1247.8,462.2 1250.0,448.3 1251.9,423.3 1254.2,415.0 1256.1,409.4 1258.3,406.7 1260.3,373.3 1262.5,356.7 1264.4,362.2 1266.7,360.8 1268.6,362.2 1270.6,367.8 1272.8,380.3 1275.0,362.2 1277.8,362.2 1280.6,360.8 1282.5,369.2 1284.4,363.6 1286.1,356.7 1288.1,351.1 1290.3,352.5 1292.2,381.7 1293.6,406.7 1295.6,427.5 1297.2,415.0 1298.3,395.6 1300.6,381.7 1301.9,363.6 1303.9,352.5 1307.5,351.1 1310.3,352.5 1313.1,353.9 1315.0,359.4 1317.2,362.2 1320.0,360.0 1322.2,380.3 1323.6,385.8 1325.6,362.2 1328.3,359.4 1330.6,360.0 1332.5,376.1 1333.9,387.2 1335.8,389.4" fill="none" stroke="#0094f4" stroke-width="2.6" stroke-linejoin="round" stroke-linecap="round"/>
<polyline points="425.0,448.3 427.8,456.7 429.7,478.9 431.7,498.3 434.4,505.3 437.2,506.7 439.4,503.9 440.8,512.2 442.8,519.2 445.0,510.8 447.8,509.4 450.6,523.3 453.3,526.1 456.9,524.7 458.9,523.3 461.7,515.0 463.9,510.8 466.7,520.6 468.6,523.3 472.8,526.1 475.6,528.9 478.3,531.7 480.6,530.3 482.5,533.1 484.4,531.7 486.7,512.2 489.4,495.6 491.7,492.8 493.6,502.5 496.4,509.4 498.6,510.0 501.4,513.6 503.3,512.2 505.6,501.1 508.3,499.7 510.3,491.4 513.1,484.4 515.8,482.2 518.6,490.0 521.4,498.3 524.2,509.4 526.9,523.3 529.2,533.1 531.1,534.4 533.9,534.4 536.1,528.9 538.1,509.4 540.0,503.9 542.2,502.5 545.0,505.3 547.2,512.2 549.2,508.1 551.9,505.3 554.7,506.7 556.7,510.8 558.9,501.1 561.7,495.6 563.9,473.3 565.8,456.7 567.2,453.9 570.0,452.5 572.2,437.2 574.2,428.9 576.9,426.1 579.7,423.9 582.5,427.5 584.4,434.4 586.7,445.6 589.4,456.7 591.7,449.7 593.6,444.2 595.8,440.0 597.8,444.2 600.0,451.1 602.8,455.3 605.6,444.2 607.5,451.1 609.7,460.8 611.7,459.4 614.4,442.8 617.2,423.3 619.4,420.6 622.8,423.3 625.6,427.5 628.3,430.3 630.6,427.5 633.1,437.2 635.3,446.9 637.5,444.2 639.4,437.2 640.8,435.8 642.8,451.1 645.6,455.3 647.8,458.1 650.0,463.6 651.4,470.6 652.8,469.2 654.7,465.0 656.1,467.8 658.3,484.4 660.3,491.4 662.2,490.0 663.9,483.1 665.8,484.4 667.8,478.9 670.0,471.9 672.2,470.6 675.0,473.3 677.8,478.9 679.7,484.4 681.7,488.6 683.9,501.1 686.1,517.8 688.1,516.4 690.0,509.4 692.2,506.7 695.0,505.3 697.8,505.3 700.0,496.9 702.8,492.8 705.6,495.6 707.5,503.9 708.9,513.6 711.1,516.4 713.1,506.7 715.0,503.9 717.2,495.6 720.0,491.4 722.8,488.6 725.6,470.6 728.3,446.9 731.7,446.9 733.9,437.2 736.7,434.4 738.6,445.6 740.8,453.9 743.1,470.6 745.0,483.1 747.8,484.4 750.0,484.4 752.8,480.3 755.6,477.5 757.5,474.7 759.4,492.8 762.2,499.7 764.4,492.8 767.8,488.6 770.0,466.4 772.8,469.2 775.6,456.7 778.9,445.6 781.7,431.7 785.3,416.4 788.6,406.7 792.2,396.9 795.0,395.6 798.3,385.8 800.6,380.3 803.3,390.0 805.6,396.9 808.3,395.6 810.3,390.0 813.1,405.3 815.8,410.8 817.8,409.4 819.4,420.6 821.4,426.1 824.2,417.8 826.9,420.6 828.9,423.3 831.1,417.8 833.9,403.9 836.1,381.7 838.9,374.7 840.8,374.7 843.6,369.2 847.2,380.3 849.2,384.4 851.1,378.9 853.9,381.7 856.1,396.9 860.3,395.6 862.5,394.2 864.4,384.4 867.2,385.8 870.0,387.2 873.3,391.4 876.1,392.8 878.9,398.3 881.7,384.4 883.9,394.2 887.2,401.1 889.4,412.2 891.7,438.6 894.4,426.1 896.4,415.0 898.3,408.1 900.6,420.6 902.8,437.2 904.7,451.1 907.5,467.8 910.3,456.7 912.2,467.8 914.4,492.8 916.7,501.1 919.4,499.7 921.4,515.0 924.2,520.6 926.9,520.6 929.7,531.1 932.5,527.5 935.3,501.1 938.1,498.3 940.8,506.7 943.6,513.6 945.6,510.8 947.8,503.9 950.6,523.3 953.3,535.8 957.5,537.2 959.4,531.7 961.7,520.6 963.9,515.0 965.8,516.4 967.8,506.7 970.0,510.8 972.2,498.3 974.2,484.4 976.1,474.7 978.3,487.2 981.1,492.8 983.9,499.7 986.7,502.5 988.9,503.9 991.7,513.6 994.4,520.6 997.8,523.3 1000.6,534.4 1002.8,528.9 1004.7,509.4 1007.5,487.2 1010.3,470.6 1013.1,465.0 1015.8,451.1 1020.0,456.7 1022.2,453.9 1024.2,446.9 1026.9,441.4 1029.7,451.1 1031.7,462.2 1034.4,452.5 1037.2,442.8 1039.4,434.4 1041.7,427.5 1044.4,427.5 1046.4,424.7 1048.3,421.9 1050.0,419.2 1051.9,417.8 1053.3,401.1 1055.6,388.6 1057.5,378.9 1060.3,380.3 1062.2,392.8 1064.4,409.4 1067.2,406.7 1069.4,405.3 1071.4,412.2 1073.3,423.3 1075.6,433.1 1078.3,444.2 1081.7,456.7 1084.4,467.8 1086.7,478.9 1089.4,495.6 1091.7,519.2 1094.4,524.7 1097.2,528.9 1100.0,531.7 1102.2,530.3 1104.7,535.8 1107.5,528.9 1110.3,520.6 1113.1,515.0 1115.8,508.1 1117.8,502.5 1120.0,505.3 1122.8,515.0 1125.6,528.9 1127.8,537.2 1129.7,523.3 1131.9,515.0 1134.4,517.8 1136.7,512.2 1138.9,508.1 1140.8,509.4 1142.8,520.6 1145.6,510.8 1147.2,515.0 1149.2,519.2 1151.1,517.8 1153.3,527.5 1155.6,520.6 1158.3,521.9 1160.3,513.6 1162.2,509.4 1165.8,510.8 1167.8,516.4 1170.0,506.7 1172.2,506.7 1174.2,526.1 1176.1,537.2 1178.3,535.8 1181.1,536.7 1184.4,535.8 1186.7,536.7 1188.9,537.8 1190.8,520.6 1193.6,503.9 1196.4,501.1 1199.2,495.6 1201.1,494.2 1202.8,501.1 1204.7,508.1 1207.5,508.1 1209.4,509.4 1211.7,519.2 1214.4,531.7 1217.2,534.4 1219.4,533.1 1221.4,535.8 1223.6,524.7 1225.6,526.1 1226.9,530.3 1229.2,510.8 1231.1,505.3 1233.1,506.7 1234.7,509.4 1236.7,509.4 1239.4,520.6 1242.8,533.1 1245.6,537.2 1248.3,534.4 1251.1,523.3 1253.9,509.4 1256.1,505.3 1258.3,503.9 1260.3,499.7 1263.1,503.9 1265.0,509.4 1267.2,492.8 1269.4,512.2 1272.8,513.6 1275.6,513.6 1277.8,515.0 1279.7,499.7 1281.7,506.7 1284.4,513.6 1286.1,512.2 1288.1,505.3 1290.8,503.9 1292.8,502.5 1295.0,496.9 1297.2,515.0 1299.2,513.6 1301.1,510.8 1303.3,509.4 1305.6,501.1 1307.5,487.2 1310.3,467.8 1312.5,476.1 1314.4,480.3 1316.7,483.1 1318.6,488.6 1320.6,488.6 1322.8,477.5 1325.6,462.2 1328.3,453.9 1331.1,449.7 1333.9,449.7 1335.8,451.7" fill="none" stroke="#00a844" stroke-width="2.6" stroke-linejoin="round" stroke-linecap="round"/>
<rect x="428" y="671.2" width="912" height="9" fill="#dce5f0"/>
<rect x="428" y="680.2" width="912" height="36.3" fill="#e3eefc"/>
<polygon points="428.5,716.4 428.5,696.8 432.7,696.8 434.7,695.6 437.1,696.8 439.6,696.8 442.0,702.9 444.5,705.4 446.9,705.4 449.4,707.1 451.8,708.6 455.5,708.6 457.9,709.1 460.4,706.6 462.8,702.9 466.5,701.2 470.2,696.8 473.4,693.9 476.3,696.3 480.0,698.8 483.6,701.7 487.3,702.9 491.0,701.7 493.4,699.3 495.9,696.8 498.3,698.8 500.8,698.0 504.5,695.6 508.1,695.6 510.6,696.8 513.5,694.9 516.7,695.6 520.4,695.6 524.0,690.7 528.9,689.0 532.6,687.5 536.3,687.5 540.0,687.5 542.4,690.7 546.1,690.0 548.5,694.4 551.0,698.0 554.1,698.0 557.1,693.9 560.8,689.5 564.4,688.3 568.1,691.4 571.8,694.4 575.4,693.2 580.3,691.9 582.8,693.2 586.5,694.4 588.9,691.9 591.4,687.5 594.3,686.5 597.5,687.0 601.2,688.3 604.8,690.0 608.5,691.9 612.2,695.6 615.8,699.3 618.3,696.8 620.7,690.7 624.4,687.8 628.1,687.5 631.8,689.0 635.4,688.3 639.1,690.0 644.0,690.7 647.7,692.4 651.3,690.7 653.8,692.4 656.2,693.9 659.4,692.4 662.4,693.2 666.0,695.6 669.7,695.6 672.1,692.4 674.6,692.4 677.0,694.9 680.7,693.9 684.4,690.7 688.1,691.9 691.7,690.7 695.4,690.7 699.1,687.0 704.0,687.0 708.9,687.5 713.8,687.5 718.7,687.0 723.5,687.0 727.2,689.0 730.9,689.0 734.6,688.3 737.0,690.7 740.7,689.5 743.1,694.4 746.8,695.6 750.5,698.8 755.4,701.7 759.0,705.4 763.9,707.1 768.8,706.6 773.7,707.1 777.4,707.8 779.9,709.1 782.3,707.8 784.7,709.1 787.2,706.1 789.6,700.5 792.1,694.4 794.5,691.4 798.2,692.4 801.9,695.6 805.6,699.3 809.2,701.7 812.9,700.5 815.3,701.7 819.0,705.4 822.7,700.5 825.1,696.8 828.8,694.4 831.3,689.5 834.9,688.3 837.4,689.0 841.1,690.7 844.7,688.3 848.4,687.0 852.1,688.3 855.7,689.0 860.6,688.3 865.5,687.5 870.4,687.5 878.7,691.4 882.3,693.9 886.0,694.4 889.7,694.9 893.4,693.9 895.8,691.4 899.5,693.9 901.9,689.0 904.4,688.3 906.8,690.7 910.5,693.9 914.2,696.3 917.8,694.4 922.7,693.9 926.4,698.0 928.9,698.0 932.5,694.4 936.2,691.4 941.1,688.3 944.8,686.5 948.4,688.3 952.1,689.0 955.8,688.3 958.2,689.5 961.9,688.3 964.4,691.4 966.8,694.4 969.2,691.4 972.9,692.4 977.8,695.6 982.7,699.8 987.6,703.7 991.3,701.7 995.0,698.0 999.8,698.8 1004.7,701.2 1008.4,701.2 1010.9,699.3 1013.3,702.2 1015.8,698.0 1019.4,699.3 1023.1,693.9 1026.8,691.4 1031.7,691.9 1035.3,689.0 1039.0,687.5 1041.5,687.5 1045.1,699.3 1047.6,699.3 1052.5,698.0 1057.4,697.3 1062.3,691.4 1065.9,692.4 1070.8,696.8 1075.7,701.2 1079.4,699.8 1084.3,694.4 1088.0,694.9 1091.6,696.8 1095.3,699.3 1100.2,699.8 1103.9,699.8 1106.3,702.2 1110.0,697.3 1114.9,692.4 1118.6,689.5 1122.2,693.2 1127.1,696.8 1130.8,694.9 1134.5,691.9 1138.2,689.0 1141.8,689.0 1146.7,688.3 1151.6,687.5 1155.3,687.0 1159.0,690.0 1162.6,691.4 1167.5,689.0 1171.2,687.5 1174.9,687.5 1178.5,688.3 1182.2,686.5 1187.1,686.5 1193.2,687.0 1198.1,692.4 1203.0,696.8 1207.9,699.8 1211.6,698.0 1215.3,696.3 1217.7,696.8 1220.2,692.4 1223.8,695.6 1227.5,696.3 1231.2,693.9 1234.9,694.9 1238.5,694.4 1242.2,689.0 1247.1,690.7 1252.0,695.6 1256.9,692.4 1261.8,690.7 1266.7,687.5 1271.6,687.5 1276.5,688.3 1281.4,687.5 1286.3,687.5 1291.2,687.5 1294.8,686.5 1297.3,689.0 1299.7,692.4 1303.4,689.5 1307.1,687.5 1312.0,686.5 1315.6,687.0 1319.3,687.0 1323.0,687.5 1326.7,687.5 1329.1,689.0 1331.5,687.5 1335.2,687.0 1338.9,687.0 1340.0,687.0 1340.0,716.4" fill="#cfe1f9"/>
<polyline points="432.7,696.8 434.7,695.6 437.1,696.8 439.6,696.8 442.0,702.9 444.5,705.4 446.9,705.4 449.4,707.1 451.8,708.6 455.5,708.6 457.9,709.1 460.4,706.6 462.8,702.9 466.5,701.2 470.2,696.8 473.4,693.9 476.3,696.3 480.0,698.8 483.6,701.7 487.3,702.9 491.0,701.7 493.4,699.3 495.9,696.8 498.3,698.8 500.8,698.0 504.5,695.6 508.1,695.6 510.6,696.8 513.5,694.9 516.7,695.6 520.4,695.6 524.0,690.7 528.9,689.0 532.6,687.5 536.3,687.5 540.0,687.5 542.4,690.7 546.1,690.0 548.5,694.4 551.0,698.0 554.1,698.0 557.1,693.9 560.8,689.5 564.4,688.3 568.1,691.4 571.8,694.4 575.4,693.2 580.3,691.9 582.8,693.2 586.5,694.4 588.9,691.9 591.4,687.5 594.3,686.5 597.5,687.0 601.2,688.3 604.8,690.0 608.5,691.9 612.2,695.6 615.8,699.3 618.3,696.8 620.7,690.7 624.4,687.8 628.1,687.5 631.8,689.0 635.4,688.3 639.1,690.0 644.0,690.7 647.7,692.4 651.3,690.7 653.8,692.4 656.2,693.9 659.4,692.4 662.4,693.2 666.0,695.6 669.7,695.6 672.1,692.4 674.6,692.4 677.0,694.9 680.7,693.9 684.4,690.7 688.1,691.9 691.7,690.7 695.4,690.7 699.1,687.0 704.0,687.0 708.9,687.5 713.8,687.5 718.7,687.0 723.5,687.0 727.2,689.0 730.9,689.0 734.6,688.3 737.0,690.7 740.7,689.5 743.1,694.4 746.8,695.6 750.5,698.8 755.4,701.7 759.0,705.4 763.9,707.1 768.8,706.6 773.7,707.1 777.4,707.8 779.9,709.1 782.3,707.8 784.7,709.1 787.2,706.1 789.6,700.5 792.1,694.4 794.5,691.4 798.2,692.4 801.9,695.6 805.6,699.3 809.2,701.7 812.9,700.5 815.3,701.7 819.0,705.4 822.7,700.5 825.1,696.8 828.8,694.4 831.3,689.5 834.9,688.3 837.4,689.0 841.1,690.7 844.7,688.3 848.4,687.0 852.1,688.3 855.7,689.0 860.6,688.3 865.5,687.5 870.4,687.5 878.7,691.4 882.3,693.9 886.0,694.4 889.7,694.9 893.4,693.9 895.8,691.4 899.5,693.9 901.9,689.0 904.4,688.3 906.8,690.7 910.5,693.9 914.2,696.3 917.8,694.4 922.7,693.9 926.4,698.0 928.9,698.0 932.5,694.4 936.2,691.4 941.1,688.3 944.8,686.5 948.4,688.3 952.1,689.0 955.8,688.3 958.2,689.5 961.9,688.3 964.4,691.4 966.8,694.4 969.2,691.4 972.9,692.4 977.8,695.6 982.7,699.8 987.6,703.7 991.3,701.7 995.0,698.0 999.8,698.8 1004.7,701.2 1008.4,701.2 1010.9,699.3 1013.3,702.2 1015.8,698.0 1019.4,699.3 1023.1,693.9 1026.8,691.4 1031.7,691.9 1035.3,689.0 1039.0,687.5 1041.5,687.5 1045.1,699.3 1047.6,699.3 1052.5,698.0 1057.4,697.3 1062.3,691.4 1065.9,692.4 1070.8,696.8 1075.7,701.2 1079.4,699.8 1084.3,694.4 1088.0,694.9 1091.6,696.8 1095.3,699.3 1100.2,699.8 1103.9,699.8 1106.3,702.2 1110.0,697.3 1114.9,692.4 1118.6,689.5 1122.2,693.2 1127.1,696.8 1130.8,694.9 1134.5,691.9 1138.2,689.0 1141.8,689.0 1146.7,688.3 1151.6,687.5 1155.3,687.0 1159.0,690.0 1162.6,691.4 1167.5,689.0 1171.2,687.5 1174.9,687.5 1178.5,688.3 1182.2,686.5 1187.1,686.5 1193.2,687.0 1198.1,692.4 1203.0,696.8 1207.9,699.8 1211.6,698.0 1215.3,696.3 1217.7,696.8 1220.2,692.4 1223.8,695.6 1227.5,696.3 1231.2,693.9 1234.9,694.9 1238.5,694.4 1242.2,689.0 1247.1,690.7 1252.0,695.6 1256.9,692.4 1261.8,690.7 1266.7,687.5 1271.6,687.5 1276.5,688.3 1281.4,687.5 1286.3,687.5 1291.2,687.5 1294.8,686.5 1297.3,689.0 1299.7,692.4 1303.4,689.5 1307.1,687.5 1312.0,686.5 1315.6,687.0 1319.3,687.0 1323.0,687.5 1326.7,687.5 1329.1,689.0 1331.5,687.5 1335.2,687.0 1338.9,687.0" fill="none" stroke="#8dbbf2" stroke-width="1.2"/>
<line x1="428.5" y1="680" x2="428.5" y2="716.4" stroke="#a9b9cf" stroke-width="1.5"/>
<line x1="1340" y1="680" x2="1340" y2="716.4" stroke="#a9b9cf" stroke-width="1.5"/>
<rect x="425.2" y="686.8" width="7.2" height="22.6" rx="2" fill="#fff" stroke="#a9b9cf" stroke-width="1.2"/>
<rect x="1336.6" y="686.8" width="6.6" height="22.6" rx="2" fill="#fff" stroke="#a9b9cf" stroke-width="1.2"/>
<rect x="882.0" y="673.5" width="1.3" height="4" fill="#fff"/>
<rect x="884.2" y="673.5" width="1.3" height="4" fill="#fff"/>
<rect x="886.4" y="673.5" width="1.3" height="4" fill="#fff"/>
</svg>
<div class="t" style="left:363.06px;top:340.00px;font-size:14px;color:#6f6f6f;">1000 °C</div>
<div class="t" style="left:1347.50px;top:340.00px;font-size:14px;color:#6f6f6f;">1000 %</div>
<div class="t" style="left:370.84px;top:388.00px;font-size:14px;color:#6f6f6f;">800 °C</div>
<div class="t" style="left:1347.50px;top:388.00px;font-size:14px;color:#6f6f6f;">500 %</div>
<div class="t" style="left:370.84px;top:437.00px;font-size:14px;color:#6f6f6f;">600 °C</div>
<div class="t" style="left:1347.50px;top:437.00px;font-size:14px;color:#6f6f6f;">0 %</div>
<div class="t" style="left:370.84px;top:485.00px;font-size:14px;color:#6f6f6f;">400 °C</div>
<div class="t" style="left:1347.50px;top:485.00px;font-size:14px;color:#6f6f6f;">-500 %</div>
<div class="t" style="left:370.84px;top:533.00px;font-size:14px;color:#6f6f6f;">200 °C</div>
<div class="t" style="left:1347.50px;top:533.00px;font-size:14px;color:#6f6f6f;">-1000 %</div>
<div class="t" style="left:386.42px;top:581.00px;font-size:14px;color:#6f6f6f;">0 °C</div>
<div class="t" style="left:1347.50px;top:581.00px;font-size:14px;color:#6f6f6f;">-1500 %</div>
<div class="t" style="left:366.18px;top:629.00px;font-size:14px;color:#6f6f6f;">-200 °C</div>
<div class="t" style="left:1347.50px;top:629.00px;font-size:14px;color:#6f6f6f;">-2000 %</div>
<div class="t" style="left:459.20px;top:646.00px;font-size:12px;color:#6f6f6f;transform:scaleX(1.0324);transform-origin:0 0;">04:00</div>
<div class="t" style="left:535.20px;top:646.00px;font-size:12px;color:#6f6f6f;transform:scaleX(1.0324);transform-origin:0 0;">05:00</div>
<div class="t" style="left:611.20px;top:646.00px;font-size:12px;color:#6f6f6f;transform:scaleX(1.0324);transform-origin:0 0;">06:00</div>
<div class="t" style="left:687.20px;top:646.00px;font-size:12px;color:#6f6f6f;transform:scaleX(1.0324);transform-origin:0 0;">07:00</div>
<div class="t" style="left:763.20px;top:646.00px;font-size:12px;color:#6f6f6f;transform:scaleX(1.0324);transform-origin:0 0;">08:00</div>
<div class="t" style="left:839.20px;top:646.00px;font-size:12px;color:#6f6f6f;transform:scaleX(1.0324);transform-origin:0 0;">09:00</div>
<div class="t" style="left:915.20px;top:646.00px;font-size:12px;color:#6f6f6f;transform:scaleX(1.0324);transform-origin:0 0;">10:00</div>
<div class="t" style="left:991.20px;top:646.00px;font-size:12px;color:#6f6f6f;transform:scaleX(1.0639);transform-origin:0 0;">11:00</div>
<div class="t" style="left:1067.20px;top:646.00px;font-size:12px;color:#6f6f6f;transform:scaleX(1.0324);transform-origin:0 0;">12:00</div>
<div class="t" style="left:1143.20px;top:646.00px;font-size:12px;color:#6f6f6f;transform:scaleX(1.0324);transform-origin:0 0;">13:00</div>
<div class="t" style="left:1219.20px;top:646.00px;font-size:12px;color:#6f6f6f;transform:scaleX(1.0324);transform-origin:0 0;">14:00</div>
<div class="t" style="left:1295.20px;top:646.00px;font-size:12px;color:#6f6f6f;transform:scaleX(1.0324);transform-origin:0 0;">15:00</div>
<div class="t" style="left:346px;top:491.5px;font-size:14.8px;-webkit-text-stroke:0.45px #6f6f6f;color:#6f6f6f;transform:translate(-50%,-50%) rotate(-90deg)">Temperature, °C</div>
<div class="t" style="left:1414.5px;top:491.5px;font-size:14.8px;-webkit-text-stroke:0.45px #6f6f6f;color:#6f6f6f;transform:translate(-50%,-50%) rotate(90deg)">Humidity, %</div>
<svg class="abs" style="left:1424px;top:724px;width:13px;height:13px" viewBox="0 0 13 13"><path d="M13 0 L13 13 L0 13 Z" fill="#c6c6c6"/></svg>
<div class="abs" style="left:313px;top:143px;width:1607px;height:75px;background:#eeeeee"></div>
<div class="abs" style="left:313px;top:143px;width:1px;height:937px;background:#ece8e8"></div>
<div class="abs" style="left:314px;top:143px;width:2px;height:937px;background:rgba(0,0,0,0.05)"></div>
<div class="abs" style="left:313px;top:142px;width:1607px;height:1px;background:rgba(0,0,0,0.12)"></div>
<div class="t" style="left:338.50px;top:149.00px;font-size:15px;color:#7a7a7a;transform:scaleX(1.1452);transform-origin:0 0;">Title*</div>
<div class="t" style="left:340.00px;top:171.00px;font-size:41px;-webkit-text-stroke:1.75px #1c1c1c;color:#1c1c1c;transform:scaleX(0.9639);transform-origin:0 0;">My Dashboard</div>
<div class="abs" style="left:1320px;top:191px;width:115.5px;height:36.2px;background:#fff;border-radius:5px;box-shadow:0 0 1.5px rgba(0,0,0,0.5),0 1px 6px rgba(0,0,0,0.22)"></div>
<svg class="abs" style="left:1330px;top:196.9px;width:25.3px;height:25.3px;fill:#3a3a3a;" viewBox="0 0 24 24"><path d="M3 17.25V21h3.75L17.81 9.94l-3.75-3.75L3 17.25zM20.71 7.04c.39-.39.39-1.02 0-1.41l-2.34-2.34c-.39-.39-1.02-.39-1.41 0l-1.83 1.83 3.75 3.75 1.83-1.83z"/></svg>
<svg class="abs" style="left:1365.7px;top:196.8px;width:24.5px;height:24.5px;fill:#3a3a3a;" viewBox="0 0 24 24"><path d="M19 9h-4V3H9v6H5l7 7 7-7zM5 18v2h14v-2H5z"/></svg>
<svg class="abs" style="left:1401px;top:197.2px;width:24.1px;height:24.1px;fill:#3a3a3a;" viewBox="0 0 24 24"><path d="M19 6.41L17.59 5 12 10.59 6.41 5 5 6.41 10.59 12 5 17.59 6.41 19 12 13.41 17.59 19 19 17.59 13.41 12z"/></svg>
<div class="abs" style="left:313px;top:1073px;width:1238px;height:7px;background:#cfcfcf"></div>
</body></html>
